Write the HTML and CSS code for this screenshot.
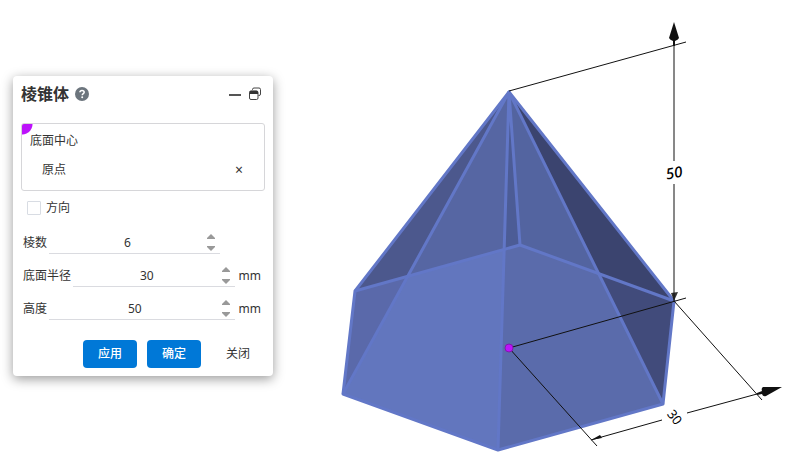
FILE: index.html
```html
<!DOCTYPE html>
<html lang="zh-CN">
<head>
<meta charset="utf-8">
<meta name="viewport" content="width=device-width, initial-scale=1">
<title>棱锥体</title>
<link rel="stylesheet" href="styles.css">
</head>
<body>
<main class="workspace">
  <form class="panel">
    <header class="panel-header">
      <h1 class="title">棱锥体</h1>
      <button class="icon-button help" type="button" aria-label="帮助">
        <svg width="14" height="14" viewBox="0 0 14 14"><circle cx="7" cy="7" r="7" fill="#6c757d"/><path d="M4.9 5.3C5 4 5.8 3.4 7 3.4S9.200 4.100 9.200 5.200C9.200 6.600 7.300 6.600 7.200 8.300" fill="none" stroke="#fff" stroke-width="1.500"/><circle cx="7.200" cy="10.200" r="1" fill="#fff"/></svg>
      </button>
      <button class="icon-button" type="button" aria-label="最小化">
        <svg width="12" height="14" viewBox="0 0 12 14"><path d="M0 8H12" stroke="#555" stroke-width="2"/></svg>
      </button>
      <button class="icon-button" type="button" aria-label="还原">
        <svg width="12" height="14" viewBox="0 0 12 14"><g fill="none" stroke="#444"><path d="M3.500 3V2.500Q3.500 1 5 1H10Q11.500 1 11.500 2.500V7Q11.500 8.500 10 8.500H9.500"/><rect x=".5" y="4" width="8.500" height="8.500" rx="1.500"/></g><path d="M.5 7V5Q.5 3.700 2 3.700H7.500Q9 3.700 9 5V7Z" fill="#333"/></svg>
      </button>
    </header>

    <section class="picker">
      <h2 class="picker-label">底面中心</h2>
      <div class="picker-item">
        <span>原点</span>
        <button class="remove" type="button" aria-label="移除">×</button>
      </div>
    </section>

    <label class="check"><input type="checkbox">方向</label>

    <div class="field field-unitless">
      <label for="sides">棱数</label>
      <div class="spin">
        <input id="sides" type="text" inputmode="numeric" value="6">
        <span class="steps">
          <button type="button" aria-label="增加棱数"><svg width="10" height="5" viewBox="0 0 10 5"><path d="M1 5V4L5 0L9 4V5Z"/></svg></button>
          <button type="button" aria-label="减少棱数"><svg width="10" height="5" viewBox="0 0 10 5"><path d="M1 0V1L5 5L9 1V0Z"/></svg></button>
        </span>
      </div>
    </div>
    <div class="field">
      <label for="radius">底面半径</label>
      <div class="spin">
        <input id="radius" type="text" inputmode="numeric" value="30">
        <span class="steps">
          <button type="button" aria-label="增加底面半径"><svg width="10" height="5" viewBox="0 0 10 5"><path d="M1 5V4L5 0L9 4V5Z"/></svg></button>
          <button type="button" aria-label="减少底面半径"><svg width="10" height="5" viewBox="0 0 10 5"><path d="M1 0V1L5 5L9 1V0Z"/></svg></button>
        </span>
      </div>
      <span class="unit">mm</span>
    </div>
    <div class="field">
      <label for="height">高度</label>
      <div class="spin">
        <input id="height" type="text" inputmode="numeric" value="50">
        <span class="steps">
          <button type="button" aria-label="增加高度"><svg width="10" height="5" viewBox="0 0 10 5"><path d="M1 5V4L5 0L9 4V5Z"/></svg></button>
          <button type="button" aria-label="减少高度"><svg width="10" height="5" viewBox="0 0 10 5"><path d="M1 0V1L5 5L9 1V0Z"/></svg></button>
        </span>
      </div>
      <span class="unit">mm</span>
    </div>

    <footer class="actions">
      <button class="button primary" type="button">应用</button>
      <button class="button primary" type="submit">确定</button>
      <button class="button" type="button">关闭</button>
    </footer>
  </form>

  <svg class="scene" viewBox="273 0 521 462" role="img" aria-label="六棱锥">
    <!-- faces above the base plane's far edges -->
    <path fill="#4c588d" d="M509 92L355 291L408 276Z"/>
    <path fill="#5666a3" d="M509 92L408 276L504 249Z"/>
    <path fill="#4c5c96" d="M509 92L504 249L520 245Z"/>
    <path fill="#5364a0" d="M509 92L520 245L599 273Z"/>
    <path fill="#3b446f" d="M509 92L599 273L674 301Z"/>
    <!-- faces seen through the base -->
    <path fill="#5a69aa" d="M355 291L408 276L343 394Z"/>
    <path fill="#6276be" d="M408 276L504 249L498 450L343 394Z"/>
    <path fill="#5a6bab" d="M504 249L520 245L599 273L663 404L498 450Z"/>
    <path fill="#414b7b" d="M599 273L674 301L663 404Z"/>
    <g class="edges">
      <path d="M509 92L355 291L343 394L498 450L663 404L674 301Z"/>
      <path d="M355 291L520 245L674 301"/>
      <path d="M343 394L509 92L498 450M520 245L509 92L663 404"/>
    </g>
    <path fill="#333" d="M671 293L678 292L674 301Z"/>
    <g class="dimension">
      <path d="M509 91L686 42M674 34V161M674 184V301M509 348L686 298M509 348L597 446M674 301L762 400M591 440L662 420M687 413L757 394"/>
    </g>
    <path fill="#111" d="M674 22L679 38Q678 40 675 41V46H673V41Q670 40 669 38Z"/>
    <path fill="#111" d="M782 387L766 396Q763 397 762 394L757 395V393L762 391Q761 388 763 387Z"/>
    <path fill="#111" d="M591 440L600 435L602 438Z"/>
    <circle cx="509" cy="348" r="4" fill="#bd12fb" stroke="#8018ad"/>
    <text class="measure measure-height" transform="translate(675 178) rotate(-10)">50</text>
    <text class="measure measure-radius" transform="translate(671 420) rotate(52)">30</text>
  </svg>
</main>
</body>
</html>
```
FILE: styles.css
```css
* {
  box-sizing: border-box;
}

body {
  margin: 0;
  background: #fff;
  color: #333;
  font: 12px/18px "Noto Sans", "Noto Sans CJK SC", sans-serif;
}

button,
input {
  font: inherit;
  color: inherit;
}

button {
  padding: 0;
  border: 0;
  background: none;
}

svg {
  display: block;
}

.workspace {
  display: flex;
  align-items: flex-start;
  min-height: 100vh;
}

.panel {
  flex: none;
  width: 260px;
  margin: 76px 0 0 13px;
  padding: 0 8px 8px;
  border-radius: 4px;
  background: #fff;
  box-shadow: 0 3px 12px rgba(0, 0, 0, 0.4);
}

.panel-header {
  display: flex;
  align-items: center;
  gap: 8px;
  height: 36px;
  padding-right: 4px;
}

.title {
  margin: 0;
  font-size: 16px;
  font-weight: 700;
}

.help {
  margin: 0 auto 0 -2px;
}

.picker {
  margin-top: 11px;
  height: 68px;
  padding: 8px 21px 0 8px;
  border: 1px solid #d6d6d9;
  border-radius: 3px;
  background: radial-gradient(circle at 0 0, #bd12fb 10px, transparent 11px);
}

.picker-label {
  margin: 0;
  font-size: 12px;
  font-weight: 400;
}

.picker-item {
  display: flex;
  justify-content: space-between;
  margin-top: 11px;
  padding-left: 12px;
}

.remove {
  font-size: 14px;
}

.check {
  display: flex;
  align-items: center;
  gap: 5px;
  height: 18px;
  margin: 8px 0 16px 6px;
}

.check input {
  appearance: none;
  width: 14px;
  height: 14px;
  margin: 0;
  border: 1px solid #d8dce3;
  border-radius: 1px;
}

.field {
  display: flex;
  align-items: center;
  height: 20px;
  margin: 0 4px 13px 2px;
}

.field-unitless {
  padding-right: 41px;
}

.spin {
  display: flex;
  align-items: center;
  flex: 1;
  height: 22px;
  margin-left: 2px;
  padding-right: 4px;
  border-bottom: 1px solid #dadbe0;
}

.spin input {
  flex: 1;
  width: 0;
  padding: 0;
  border: 0;
  background: none;
  text-align: center;
}

.steps {
  display: flex;
  flex-direction: column;
  gap: 7px;
}

.steps svg {
  fill: #999;
}

.unit {
  margin-left: 4px;
}

.actions {
  display: flex;
  gap: 10px;
  margin-top: 21px;
  padding-left: 62px;
}

.button {
  width: 54px;
  height: 28px;
  border-radius: 4px;
}

.primary {
  background: #0078d7;
  color: #fff;
  font-weight: 500;
}

.scene {
  flex: 1;
  min-width: 0;
  height: auto;
}

.edges {
  fill: none;
  stroke: #6277c7;
  stroke-width: 3;
  stroke-linejoin: round;
}

.dimension {
  fill: none;
  stroke: #111;
  stroke-width: 1;
}

.measure {
  font-family: "Noto Sans", sans-serif;
  fill: #000;
  text-anchor: middle;
}

.measure-height {
  font-size: 15px;
  font-weight: 500;
  font-style: italic;
}

.measure-radius {
  font-size: 13px;
}
```
